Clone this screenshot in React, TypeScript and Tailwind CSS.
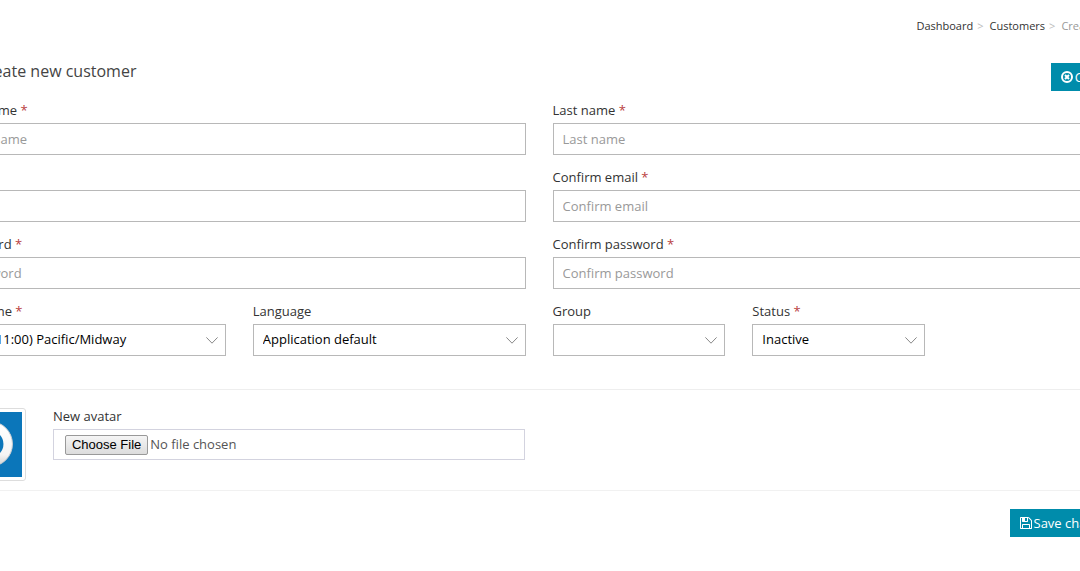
import { useId, type ReactNode } from "react";

const control =
  "block h-8 w-full rounded-none border border-[#b8b8b8] bg-white px-[9px] text-[13px] leading-5 outline-none focus:border-[#008cab]";

function Label({ id, text, required }: { id: string; text: string; required?: boolean }) {
  return (
    <label htmlFor={id} className="mb-[3px] block h-5 text-[13px] leading-5 whitespace-nowrap text-[#333]">
      {text}
      {required && <span className="text-[#b94040]"> *</span>}
    </label>
  );
}

function TextField({ text, type = "text" }: { text: string; type?: string }) {
  const id = useId();
  return (
    <div className="col-span-6">
      <Label id={id} text={text} required />
      <input id={id} type={type} placeholder={text} className={`${control} text-[#333] placeholder:text-[#999]`} />
    </div>
  );
}

function SelectField({
  text,
  options,
  required,
  className,
}: {
  text: string;
  options: string[];
  required?: boolean;
  className: string;
}) {
  const id = useId();
  return (
    <div className={className}>
      <Label id={id} text={text} required={required} />
      <div className="relative">
        <select id={id} className={`${control} appearance-none pr-7 pb-[2px] text-black`}>
          {options.map((option) => (
            <option key={option}>{option}</option>
          ))}
        </select>
        <svg
          viewBox="0 0 12 7"
          className="pointer-events-none absolute top-[13px] right-2 h-[7px] w-3"
          fill="none"
          stroke="#888"
          aria-hidden="true"
        >
          <path d="M0.4 0.4 6 6.2 11.6 0.4" />
        </svg>
      </div>
    </div>
  );
}

function ActionButton({ icon, children }: { icon: ReactNode; children: ReactNode }) {
  return (
    <button
      type="button"
      className="flex h-7 shrink-0 items-center gap-0.5 bg-[#008cab] px-2.5 text-[13px] leading-5 whitespace-nowrap text-white"
    >
      {icon}
      {children}
    </button>
  );
}

function CancelIcon() {
  return (
    <svg viewBox="0 0 12 12" className="h-3 w-3" fill="none" stroke="currentColor" aria-hidden="true">
      <circle cx="6" cy="6" r="5" strokeWidth="2" />
      <path d="m4 4 4 4m0-4-4 4" strokeWidth="2" />
    </svg>
  );
}

function SaveIcon() {
  return (
    <svg viewBox="0 0 1536 1536" className="h-3 w-3" fill="currentColor" aria-hidden="true">
      <path d="M384 1408h768v-384H384v384zm896 0h128V512q0-14-10-38.500T1378 439L1097 158q-10-10-34-20t-39-10v416q0 40-28 68t-68 28H352q-40 0-68-28t-28-68V128H128v1280h128V992q0-40 28-68t68-28h832q40 0 68 28t28 68v416zM896 480V160q0-13-9.500-22.500T864 128H672q-13 0-22.500 9.500T640 160v320q0 13 9.500 22.500T672 512h192q13 0 22.500-9.500T896 480zm640 32v928q0 40-28 68t-68 28H96q-40 0-68-28t-28-68V96q0-40 28-68T96 0h928q40 0 88 20t76 48l280 280q28 28 48 76t20 88z" />
    </svg>
  );
}

function Avatar() {
  return (
    <div className="col-span-1 mt-0.5 h-[73px] rounded-[3px] border border-[#ddd] p-[3px]">
      <svg viewBox="0 0 65 65" preserveAspectRatio="xMidYMid slice" className="h-full w-full bg-[#0b76ba]" role="img" aria-label="Avatar">
        <defs>
          <linearGradient id="ring" x1="0" y1="0" x2="0" y2="1">
            <stop offset="0" stopColor="#fff" />
            <stop offset="0.8" stopColor="#f4f4f4" />
            <stop offset="1" stopColor="#dcdcdc" />
          </linearGradient>
        </defs>
        <circle cx="33" cy="32" r="18" fill="none" stroke="url(#ring)" strokeWidth="9" />
        <circle cx="33" cy="32" r="22.500" fill="none" stroke="#c9ccd0" strokeWidth="1" />
      </svg>
    </div>
  );
}

export default function App() {
  const fileId = useId();
  return (
    <div className="min-h-screen overflow-hidden bg-white font-['Open_Sans',sans-serif] text-[13px] text-[#333]">
      <div className="-mr-[45px] -ml-[47px]">
        <nav aria-label="Breadcrumb" className="-mr-[46px] flex justify-end pt-4 text-[11px] leading-5 whitespace-nowrap">
          <a href="#dashboard">Dashboard</a>
          <span className="mr-1.5 ml-1 text-[#bbb]">&gt;</span>
          <a href="#customers">Customers</a>
          <span className="mr-1.5 ml-1 text-[#bbb]">&gt;</span>
          <span className="text-[#999]">Create new customer</span>
        </nav>

        <header className="mt-[27px] flex h-7 items-start justify-between">
          <h1 className="flex items-center gap-2 text-base leading-4 text-[#444]">
            <svg viewBox="0 0 16 16" className="h-4 w-4" fill="none" stroke="currentColor" aria-hidden="true">
              <path d="M8 2v12M2 8h12" strokeWidth="2" />
            </svg>
            Create new customer
          </h1>
          <ActionButton icon={<CancelIcon />}>Cancel</ActionButton>
        </header>

        <form className="mt-[9px]">
          <div className="grid grid-cols-12 gap-x-[27px] gap-y-3">
            <TextField text="First name" />
            <TextField text="Last name" />
            <TextField text="Email" type="email" />
            <TextField text="Confirm email" type="email" />
            <TextField text="Password" type="password" />
            <TextField text="Confirm password" type="password" />
            <SelectField className="col-span-3" text="Timezone" options={["(UTC-11:00) Pacific/Midway"]} required />
            <SelectField className="col-span-3" text="Language" options={["Application default"]} />
            <SelectField className="col-span-2" text="Group" options={["", "Default"]} />
            <SelectField className="col-span-2" text="Status" options={["Inactive", "Active"]} required />
          </div>

          <hr className="-mx-5 mt-[33px] border-[#eee]" />

          <div className="mt-4 grid grid-cols-12 gap-x-[27px]">
            <Avatar />
            <div className="col-span-5">
              <Label id={fileId} text="New avatar" />
              <input
                id={fileId}
                type="file"
                className="block h-[31px] w-full border border-[#d3d3df] px-[11px] py-1 text-[13px] leading-5 text-[#555] file:mr-0.5 file:h-5 file:rounded-[2px] file:border file:border-solid file:border-[#999] file:bg-linear-to-b file:from-[#f5f5f5] file:to-[#dcdcdc] file:px-1.5 file:font-['Liberation_Sans',sans-serif] file:text-[13px] file:leading-4 file:text-black"
              />
            </div>
          </div>

          <hr className="-mx-5 mt-[9px] border-[#f1f1f1]" />

          <div className="mt-[18px] flex justify-end">
            <ActionButton icon={<SaveIcon />}>Save changes</ActionButton>
          </div>
        </form>
      </div>
    </div>
  );
}
